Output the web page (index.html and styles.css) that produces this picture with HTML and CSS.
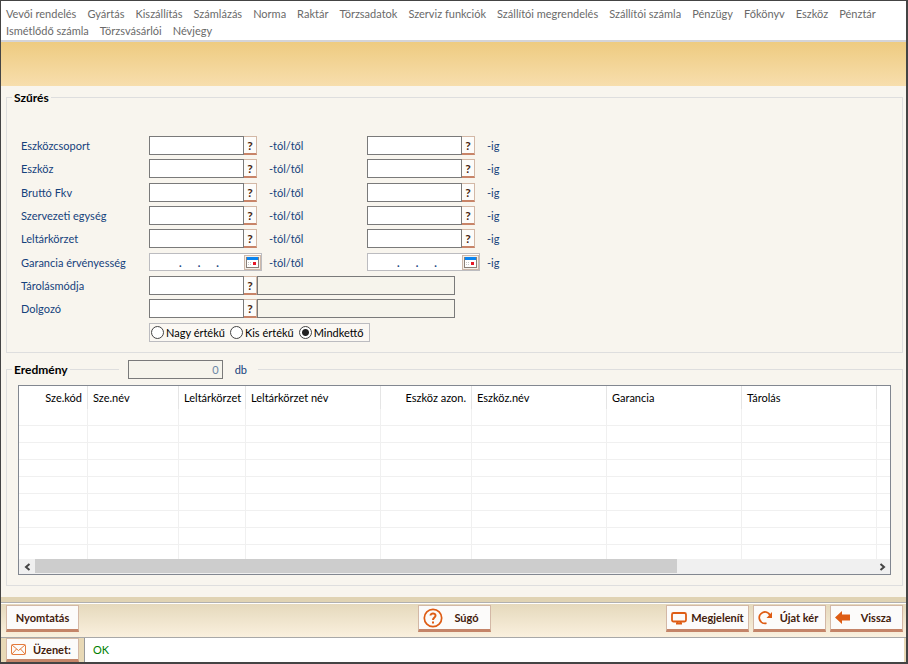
FILE: index.html
```html
<!DOCTYPE html>
<html lang="hu">
  <head>
    <meta charset="UTF-8" />
    <meta name="viewport" content="width=device-width, initial-scale=1.0" />
    <title>Eszköz</title>
    <link rel="stylesheet" href="styles.css">
  </head>
  <body>
    <nav class="menu">
      <a href="#">Vevői rendelés</a>
      <a href="#">Gyártás</a>
      <a href="#">Kiszállítás</a>
      <a href="#">Számlázás</a>
      <a href="#">Norma</a>
      <a href="#">Raktár</a>
      <a href="#">Törzsadatok</a>
      <a href="#">Szerviz funkciók</a>
      <a href="#">Szállítói megrendelés</a>
      <a href="#">Szállítói számla</a>
      <a href="#">Pénzügy</a>
      <a href="#">Főkönyv</a>
      <a href="#">Eszköz</a>
      <a href="#">Pénztár</a>
      <a href="#">Ismétlődő számla</a>
      <a href="#">Törzsvásárlói</a>
      <a href="#">Névjegy</a>
    </nav>

    <div class="band"></div>

    <main>
      <fieldset class="filter">
        <legend>Szűrés</legend>
        <div class="grid">
          <label for="csoport1">Eszközcsoport</label>
          <div class="field"><input type="text" id="csoport1" /><button>?</button></div>
          <label for="csoport1">-tól/től</label>
          <div class="field"><input type="text" id="csoport2" /><button>?</button></div>
          <label for="csoport2">-ig</label>

          <label for="eszkoz1">Eszköz</label>
          <div class="field"><input type="text" id="eszkoz1" /><button>?</button></div>
          <label for="eszkoz1">-tól/től</label>
          <div class="field"><input type="text" id="eszkoz2" /><button>?</button></div>
          <label for="eszkoz2">-ig</label>

          <label for="fkv1">Bruttó Fkv</label>
          <div class="field"><input type="text" id="fkv1" /><button>?</button></div>
          <label for="fkv1">-tól/től</label>
          <div class="field"><input type="text" id="fkv2" /><button>?</button></div>
          <label for="fkv2">-ig</label>

          <label for="egyseg1">Szervezeti egység</label>
          <div class="field"><input type="text" id="egyseg1" /><button>?</button></div>
          <label for="egyseg1">-tól/től</label>
          <div class="field"><input type="text" id="egyseg2" /><button>?</button></div>
          <label for="egyseg2">-ig</label>

          <label for="korzet1">Leltárkörzet</label>
          <div class="field"><input type="text" id="korzet1" /><button>?</button></div>
          <label for="korzet1">-tól/től</label>
          <div class="field"><input type="text" id="korzet2" /><button>?</button></div>
          <label for="korzet2">-ig</label>

          <label for="garancia1">Garancia érvényesség</label>
          <div class="date">
            <input type="text" id="garancia1" value=".      .      ." />
            <button aria-label="Naptár">
              <svg width="13" height="11" viewBox="0 0 13 11"><path fill="#8a8078" d="M0 0h13v11H0z"/><path fill="#fff" d="M1 3h11v7H1z"/><path fill="#0a84f0" d="M1 0h11v3H1z"/><path fill="#c8c8c8" d="M2 5h1v1H2zM4 5h1v1H4zM2 7h1v1H2zM4 7h1v1H4z"/><path fill="#e81828" d="M7 5h3v3H7z"/></svg>
            </button>
          </div>
          <label for="garancia1">-tól/től</label>
          <div class="date">
            <input type="text" id="garancia2" value=".      .      ." />
            <button aria-label="Naptár">
              <svg width="13" height="11" viewBox="0 0 13 11"><path fill="#8a8078" d="M0 0h13v11H0z"/><path fill="#fff" d="M1 3h11v7H1z"/><path fill="#0a84f0" d="M1 0h11v3H1z"/><path fill="#c8c8c8" d="M2 5h1v1H2zM4 5h1v1H4zM2 7h1v1H2zM4 7h1v1H4z"/><path fill="#e81828" d="M7 5h3v3H7z"/></svg>
            </button>
          </div>
          <label for="garancia2">-ig</label>

          <label for="tarolas">Tárolásmódja</label>
          <div class="field wide">
            <input type="text" id="tarolas" /><button>?</button><input type="text" class="name" aria-label="Tárolásmód neve" readonly />
          </div>

          <label for="dolgozo">Dolgozó</label>
          <div class="field wide">
            <input type="text" id="dolgozo" /><button>?</button><input type="text" class="name" aria-label="Dolgozó neve" readonly />
          </div>

          <div class="radios">
            <label><input type="radio" name="ertek" />Nagy értékű</label>
            <label><input type="radio" name="ertek" />Kis értékű</label>
            <label><input type="radio" name="ertek" checked />Mindkettő</label>
          </div>
        </div>
      </fieldset>

      <fieldset class="result">
        <legend>
          <span class="title">Eredmény</span>
          <span class="line"></span>
          <input type="text" id="count" value="0" readonly />
          <label for="count">db</label>
        </legend>
        <div class="list">
          <table>
            <colgroup>
              <col class="w69"><col class="w91"><col class="w67"><col class="w135">
              <col class="w91"><col class="w135"><col class="w135"><col class="w135"><col>
            </colgroup>
            <thead>
              <tr>
                <th class="right">Sze.kód</th>
                <th>Sze.név</th>
                <th class="right">Leltárkörzet</th>
                <th>Leltárkörzet név</th>
                <th class="right">Eszköz azon.</th>
                <th>Eszköz.név</th>
                <th>Garancia</th>
                <th>Tárolás</th>
                <th></th>
              </tr>
            </thead>
            <tbody>
              <tr><td></td><td></td><td></td><td></td><td></td><td></td><td></td><td></td><td></td></tr>
              <tr><td></td><td></td><td></td><td></td><td></td><td></td><td></td><td></td><td></td></tr>
              <tr><td></td><td></td><td></td><td></td><td></td><td></td><td></td><td></td><td></td></tr>
              <tr><td></td><td></td><td></td><td></td><td></td><td></td><td></td><td></td><td></td></tr>
              <tr><td></td><td></td><td></td><td></td><td></td><td></td><td></td><td></td><td></td></tr>
              <tr><td></td><td></td><td></td><td></td><td></td><td></td><td></td><td></td><td></td></tr>
              <tr><td></td><td></td><td></td><td></td><td></td><td></td><td></td><td></td><td></td></tr>
              <tr><td></td><td></td><td></td><td></td><td></td><td></td><td></td><td></td><td></td></tr>
              <tr class="last"><td></td><td></td><td></td><td></td><td></td><td></td><td></td><td></td><td></td></tr>
            </tbody>
          </table>
          <div class="scroll">
            <button aria-label="Balra"><svg width="7" height="8" viewBox="0 0 7 8"><path d="M5.500 1L2 4l3.500 3" fill="none" stroke="#444" stroke-width="2"/></svg></button>
            <div class="track"><div class="thumb"></div></div>
            <button aria-label="Jobbra"><svg width="7" height="8" viewBox="0 0 7 8"><path d="M1.500 1L5 4 1.500 7" fill="none" stroke="#444" stroke-width="2"/></svg></button>
          </div>
        </div>
      </fieldset>
    </main>

    <div class="toolbar">
      <div class="group">
        <button class="btn">Nyomtatás</button>
      </div>
      <button class="btn icon">
        <svg width="20" height="20" viewBox="0 0 20 20" fill="none" stroke="#de5c14"><circle cx="10" cy="10" r="8.700" stroke-width="1.700"/><path d="M7.500 7.600C7.500 4.700 12.600 4.800 12.500 7.700 12.400 9.500 10 9.500 10 12" stroke-width="2"/><path d="M9 13.500h2v2H9z" fill="#de5c14" stroke="none"/></svg>
        <span>Súgó</span>
      </button>
      <div class="group end">
        <button class="btn icon show">
          <svg width="16" height="14" viewBox="0 0 16 14" fill="none" stroke="#de5c14" stroke-width="1.800"><rect x="1" y="2" width="14" height="8.500" rx="1.500"/><path d="M5 12.500h6M6.500 11v1.500M9.500 11v1.500"/></svg>
          <span>Megjelenít</span>
        </button>
        <button class="btn icon">
          <svg width="15" height="15" viewBox="0 0 15 15"><path d="M8.500 13.200A5.700 5.700 0 1 1 12 5" fill="none" stroke="#de5c14" stroke-width="1.800"/><path d="M14 2v6H8.500z" fill="#de5c14"/></svg>
          <span>Újat kér</span>
        </button>
        <button class="btn icon">
          <svg width="15" height="13" viewBox="0 0 15 13"><path d="M0 6.500L7 0v3.500h8v6H7V13z" fill="#de5c14"/></svg>
          <span>Vissza</span>
        </button>
      </div>
    </div>

    <footer class="status">
      <button class="btn icon">
        <svg width="15" height="11" viewBox="0 0 15 11" fill="none" stroke="#e47a3c"><rect x=".5" y=".5" width="14" height="10" rx="1"/><path d="M1 1l6.500 5.500L14 1M1 10l4.500-5M14 10L9.500 5"/></svg>
        <span>Üzenet:</span>
      </button>
      <output class="message">OK</output>
    </footer>
  </body>
</html>
```
FILE: styles.css
```css
* {
  box-sizing: border-box;
}

body {
  display: flex;
  flex-direction: column;
  min-height: 100vh;
  margin: 0;
  border: 1px solid #444;
  border-width: 1px 2px 2px 1px;
  background-color: #f8f5ee;
  color: #000;
  font-family: Lato, "Open Sans", sans-serif;
  font-size: 11px;
  line-height: 17px;
}

input,
button {
  margin: 0;
  font-family: inherit;
  font-size: inherit;
  line-height: inherit;
}

.menu {
  display: flex;
  flex-wrap: wrap;
  column-gap: 11px;
  padding: 4px 24px 1px 5px;
  background-color: #fff;
  border-bottom: 2px solid #d4d4d8;
}

.menu a {
  color: #6a6a6a;
  text-decoration: none;
}

.band {
  height: 44px;
  background: linear-gradient(#eecb80, #f7dead);
}

main {
  flex: 1;
  padding: 4px 3px 10px 5px;
}

fieldset {
  min-width: 0;
  margin: 0;
  border: 1px solid #dedede;
}

legend {
  font-size: 12px;
  font-weight: bold;
}

.filter {
  padding: 29px 14px 8px;
}

.filter legend {
  margin-left: -9px;
  padding: 0 2px;
  line-height: 15px;
}

.grid {
  display: grid;
  grid-template-columns: 128px 120px 98px 120px auto;
  grid-auto-rows: 1fr;
  align-items: center;
  min-height: 210px;
  color: #15427c;
}

.field {
  display: flex;
}

.field input {
  width: 95px;
  height: 19px;
  padding: 0 4px;
  border: 1px solid #7a7a7a;
  background-color: #fff;
}

.field button {
  width: 13px;
  height: 19px;
  padding: 0;
  border: 1px solid #d3b8a6;
  border-left: none;
  border-bottom: 2px solid #c88468;
  background-color: #fdfcfa;
  color: #4a2410;
  font-size: 12px;
  font-weight: bold;
}

.wide {
  grid-column: 2 / 6;
}

.field .name {
  width: 198px;
  background-color: #f6f4ec;
}

.date {
  display: flex;
  align-items: center;
  width: 113px;
  height: 18px;
  border: 1px solid #bcbcc0;
  background-color: #fff;
}

.date input {
  flex: 1;
  min-width: 0;
  height: 16px;
  padding: 0 0 0 29px;
  border: none;
  background: none;
  color: #15427c;
  font-weight: bold;
}

.date button {
  display: flex;
  padding: 1px;
  border: 1px solid #cdb8aa;
  background-color: #f4efe9;
}

.radios {
  display: flex;
  grid-column: 2 / 6;
  justify-self: start;
  gap: 5px;
  padding: 0 5px 0 1px;
  border: 1px solid #bcbcc0;
  background-color: #fbf8f3;
  color: #000;
}

.radios label {
  display: flex;
  align-items: center;
  gap: 2px;
}

.radios input {
  appearance: none;
  width: 13px;
  height: 13px;
  border: 1px solid #444;
  border-radius: 50%;
  background-color: #fff;
}

.radios input:checked {
  background: radial-gradient(#222 0 3px, #fff 4px);
}

.result {
  margin-top: 6px;
  padding: 6px 11px 10px;
}

.result legend {
  display: flex;
  align-items: center;
  width: 246px;
  height: 20px;
  margin-left: -6px;
  padding: 0 2px;
  background-color: #f8f5ee;
}

.result .line {
  flex: 1;
  height: 1px;
  margin: 0 9px 0 2px;
  background-color: #dedede;
}

.result legend input {
  width: 95px;
  height: 19px;
  padding: 0 3px;
  border: 1px solid #7a7a7a;
  background-color: #f6f4ec;
  color: #6b84a4;
  font-size: 11px;
  text-align: right;
}

.result legend label {
  margin: 0 9px 0 12px;
  color: #15427c;
  font-size: 11px;
  font-weight: normal;
}

.list {
  overflow: hidden;
  border: 1px solid #828790;
  background-color: #fff;
}

table {
  width: 100%;
  table-layout: fixed;
  border-collapse: separate;
  border-spacing: 0;
}

.w67 {
  width: 67px;
}

.w69 {
  width: 69px;
}

.w91 {
  width: 91px;
}

.w135 {
  width: 135px;
}

th {
  height: 23px;
  padding: 0 5px;
  border-right: 1px solid #e5e5e5;
  font-weight: normal;
  text-align: left;
  white-space: nowrap;
}

th.right {
  text-align: right;
}

td {
  height: 17px;
  padding: 0;
  border-right: 1px solid #f0f0f0;
  border-bottom: 1px solid #f0f0f0;
}

th:last-child,
td:last-child {
  border-right: none;
}

.last td {
  height: 14px;
  border-bottom: none;
}

.scroll {
  display: flex;
  height: 15px;
  background-color: #f0f0f0;
}

.scroll button {
  display: flex;
  align-items: center;
  justify-content: center;
  width: 16px;
  padding: 0;
  border: none;
  background: none;
}

.track {
  flex: 1;
}

.thumb {
  width: 76.5%;
  height: 14px;
  background-color: #cdcdcd;
}

.toolbar {
  display: grid;
  grid-template-columns: 1fr auto 1fr;
  align-items: start;
  padding: 3px 3px 5px 5px;
  border-top: 5px solid #e0d3b3;
  background: linear-gradient(#b0b0b0 0 1px, #fff 1px 2px, #e5d9bc 2px, #faf0de);
}

.group {
  display: flex;
  gap: 4px;
}

.end {
  justify-content: flex-end;
}

.btn {
  min-width: 73px;
  height: 27px;
  padding: 0 8px;
  border: 1px solid #d3b8a6;
  border-bottom: 3px solid #c48468;
  background-color: #fcfbfa;
  color: #43200c;
  font-weight: bold;
}

.icon {
  display: flex;
  align-items: center;
  padding: 0 4px;
}

.icon span {
  flex: 1;
  padding-left: 4px;
  text-align: center;
}

.show {
  min-width: 83px;
}

.status {
  display: flex;
  gap: 5px;
  padding: 0 2px 0 5px;
  border-top: 1px solid #a8a8a8;
  background-color: #e8d9b6;
}

.status .btn {
  height: 24px;
}

.message {
  flex: 1;
  padding: 3px 8px;
  border-left: 1px solid #999;
  background-color: #fff;
  color: #008000;
}
```
